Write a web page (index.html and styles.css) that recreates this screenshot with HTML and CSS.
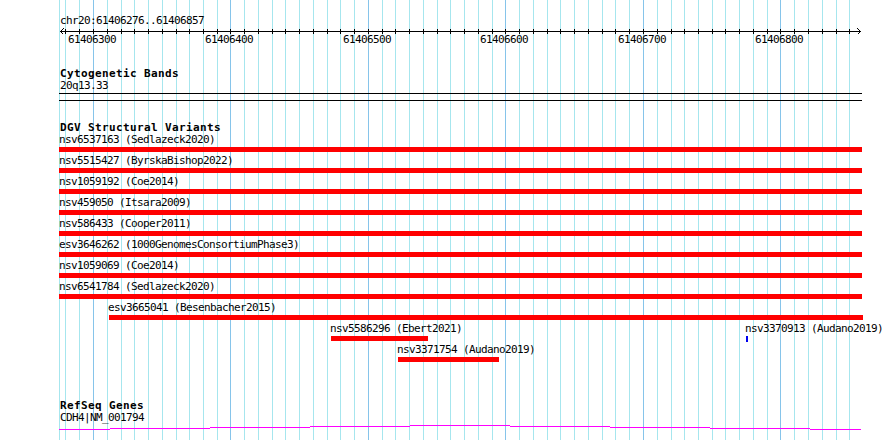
FILE: index.html
```html
<!DOCTYPE html>
<html lang="en">
	<head>
		<meta charset="UTF-8" />
		<meta name="viewport" content="width=device-width, initial-scale=1.0" />
		<title>chr20:61406276..61406857</title>
		<link rel="stylesheet" href="styles.css">
	</head>
	<body>
		<div class="panel">
			<!-- grid, one line every 10 bp -->
			<svg class="grid" width="890" height="440" viewBox="0 0 890 440">
				<path class="grid-minor" d="M59.5 0V440M65.5 0V440M79.5 0V440M107.5 0V440M121.5 0V440M134.5 0V440M148.5 0V440M162.5 0V440M176.5 0V440M189.5 0V440M203.5 0V440M217.5 0V440M244.5 0V440M258.5 0V440M272.5 0V440M285.5 0V440M299.5 0V440M313.5 0V440M327.5 0V440M340.5 0V440M354.5 0V440M382.5 0V440M395.5 0V440M409.5 0V440M423.5 0V440M437.5 0V440M450.5 0V440M464.5 0V440M478.5 0V440M492.5 0V440M519.5 0V440M533.5 0V440M547.5 0V440M560.5 0V440M574.5 0V440M588.5 0V440M602.5 0V440M615.5 0V440M629.5 0V440M657.5 0V440M671.5 0V440M684.5 0V440M698.5 0V440M712.5 0V440M725.5 0V440M739.5 0V440M753.5 0V440M767.5 0V440M794.5 0V440M808.5 0V440M822.5 0V440M836.5 0V440M849.5 0V440" />
				<path class="grid-major" d="M93.5 0V440M230.5 0V440M368.5 0V440M505.5 0V440M643.5 0V440M780.5 0V440" />
			</svg>

			<section class="ruler">
				<div class="ruler-name">chr20:61406276..61406857</div>
				<svg class="ruler-axis" width="890" height="7" viewBox="0 0 890 7">
					<path d="M60 4.5H861" />
					<path d="M63.5 1.5L60.5 4.5L63.5 7.5M857.5 1.5L860.5 4.5L857.5 7.5" />
					<path d="M65.5 2V7M79.5 2V7M93.5 2V7M107.5 2V7M121.5 2V7M134.5 2V7M148.5 2V7M162.5 2V7M176.5 2V7M189.5 2V7M203.5 2V7M217.5 2V7M230.5 2V7M244.5 2V7M258.5 2V7M272.5 2V7M285.5 2V7M299.5 2V7M313.5 2V7M327.5 2V7M340.5 2V7M354.5 2V7M368.5 2V7M382.5 2V7M395.5 2V7M409.5 2V7M423.5 2V7M437.5 2V7M450.5 2V7M464.5 2V7M478.5 2V7M492.5 2V7M505.5 2V7M519.5 2V7M533.5 2V7M547.5 2V7M560.5 2V7M574.5 2V7M588.5 2V7M602.5 2V7M615.5 2V7M629.5 2V7M643.5 2V7M657.5 2V7M671.5 2V7M684.5 2V7M698.5 2V7M712.5 2V7M725.5 2V7M739.5 2V7M753.5 2V7M767.5 2V7M780.5 2V7M794.5 2V7M808.5 2V7M822.5 2V7M836.5 2V7M849.5 2V7" />
				</svg>
				<div class="ruler-labels">
					<span style="left: 68px">61406300</span>
					<span style="left: 205px">61406400</span>
					<span style="left: 343px">61406500</span>
					<span style="left: 480px">61406600</span>
					<span style="left: 618px">61406700</span>
					<span style="left: 755px">61406800</span>
				</div>
			</section>

			<section class="track track-cyto">
				<h2 class="track-title">Cytogenetic Bands</h2>
				<div class="track-label">20q13.33</div>
				<div class="band"></div>
			</section>

			<section class="track track-dgv">
				<h2 class="track-title">DGV Structural Variants</h2>
				<div class="row">
					<div class="feature" style="left: 59px"><span class="feature-label">nsv6537163 (Sedlazeck2020)</span><span class="feature-bar" style="width: 803px"></span></div>
				</div>
				<div class="row">
					<div class="feature" style="left: 59px"><span class="feature-label">nsv5515427 (ByrskaBishop2022)</span><span class="feature-bar" style="width: 803px"></span></div>
				</div>
				<div class="row">
					<div class="feature" style="left: 59px"><span class="feature-label">nsv1059192 (Coe2014)</span><span class="feature-bar" style="width: 803px"></span></div>
				</div>
				<div class="row">
					<div class="feature" style="left: 59px"><span class="feature-label">nsv459050 (Itsara2009)</span><span class="feature-bar" style="width: 803px"></span></div>
				</div>
				<div class="row">
					<div class="feature" style="left: 59px"><span class="feature-label">nsv586433 (Cooper2011)</span><span class="feature-bar" style="width: 803px"></span></div>
				</div>
				<div class="row">
					<div class="feature" style="left: 59px"><span class="feature-label">esv3646262 (1000GenomesConsortiumPhase3)</span><span class="feature-bar" style="width: 803px"></span></div>
				</div>
				<div class="row">
					<div class="feature" style="left: 59px"><span class="feature-label">nsv1059069 (Coe2014)</span><span class="feature-bar" style="width: 803px"></span></div>
				</div>
				<div class="row">
					<div class="feature" style="left: 59px"><span class="feature-label">nsv6541784 (Sedlazeck2020)</span><span class="feature-bar" style="width: 803px"></span></div>
				</div>
				<div class="row">
					<div class="feature" style="left: 108px"><span class="feature-label">esv3665041 (Besenbacher2015)</span><span class="feature-bar" style="width: 754px; margin-left: 1px"></span></div>
				</div>
				<div class="row">
					<div class="feature" style="left: 330px"><span class="feature-label">nsv5586296 (Ebert2021)</span><span class="feature-bar" style="width: 97px; margin-left: 1px"></span></div>
					<div class="feature" style="left: 745px"><span class="feature-label">nsv3370913 (Audano2019)</span><span class="feature-bar feature-bar--small" style="width: 2px; margin-left: 1px"></span></div>
				</div>
				<div class="row">
					<div class="feature" style="left: 397px"><span class="feature-label">nsv3371754 (Audano2019)</span><span class="feature-bar" style="width: 101px; margin-left: 1px"></span></div>
				</div>
			</section>

			<section class="track track-genes">
				<h2 class="track-title">RefSeq Genes</h2>
				<div class="track-label">CDH4|NM_001794</div>
				<svg class="gene" width="890" height="7" viewBox="0 0 890 7">
					<path d="M59 5.5H110M110 4.5H210M210 3.5H310M310 2.5H410M410 1.5H510M510 2.5H610M610 3.5H710M710 4.5H810M810 5.5H861" />
				</svg>
			</section>
		</div>
	</body>
</html>
```

FILE: styles.css
```css
html,
body {
	margin: 0;
	padding: 0;
	background: #ffffff;
	overflow: hidden;
}

body {
	color: #000000;
	font-family: "DejaVu Sans Mono", "Liberation Mono", monospace;
	font-size: 11px;
	letter-spacing: -0.62px;
	line-height: 12px;
}

.panel {
	position: relative;
	width: 890px;
	height: 440px;
}

.grid {
	position: absolute;
	top: 0;
	left: 0;
	shape-rendering: crispEdges;
}
.grid-minor {
	stroke: #a6e6ee;
	stroke-width: 1;
}
.grid-major {
	stroke: #86c4ea;
	stroke-width: 1;
}

section {
	position: relative;
}

/* ruler */
.ruler {
	height: 46px;
	box-sizing: border-box;
	padding: 15px 0 0 60px;
}
.ruler-name {
	white-space: nowrap;
}
.ruler-axis {
	display: block;
	margin-left: -60px;
	overflow: visible;
	shape-rendering: crispEdges;
}
.ruler-axis path {
	fill: none;
	stroke: #000000;
	stroke-width: 1;
}
.ruler-labels {
	position: relative;
	height: 12px;
	margin-left: -60px;
}
.ruler-labels span {
	position: absolute;
	top: 0;
	white-space: nowrap;
}

/* tracks */
.track {
	padding-left: 60px;
}
.track-title {
	margin: 0;
	font-size: 11px;
	font-weight: bold;
	letter-spacing: 0.38px;
	line-height: 12px;
	white-space: nowrap;
}
.track-label {
	white-space: nowrap;
}

.track-cyto {
	margin-top: 22px;
}
.band {
	width: 803px;
	height: 8px;
	margin: 1px 0 0 -1px;
	box-sizing: border-box;
	border-top: 1px solid #000000;
	border-bottom: 1px solid #000000;
}

.track-dgv {
	margin-top: 21px;
}
.row {
	position: relative;
	height: 21px;
	margin-left: -60px;
}
.feature {
	position: absolute;
	top: 0;
}
.feature-label {
	display: block;
	white-space: nowrap;
}
.feature-bar {
	display: block;
	height: 5px;
	margin-top: 1px;
	background: #ff0000;
}
.feature-bar--small {
	height: 6px;
	background: #0000ee;
}

.track-genes {
	margin-top: 35px;
}
.gene {
	display: block;
	margin-left: -60px;
	shape-rendering: crispEdges;
}
.gene path {
	fill: none;
	stroke: #ff00ff;
	stroke-width: 1;
}
```
